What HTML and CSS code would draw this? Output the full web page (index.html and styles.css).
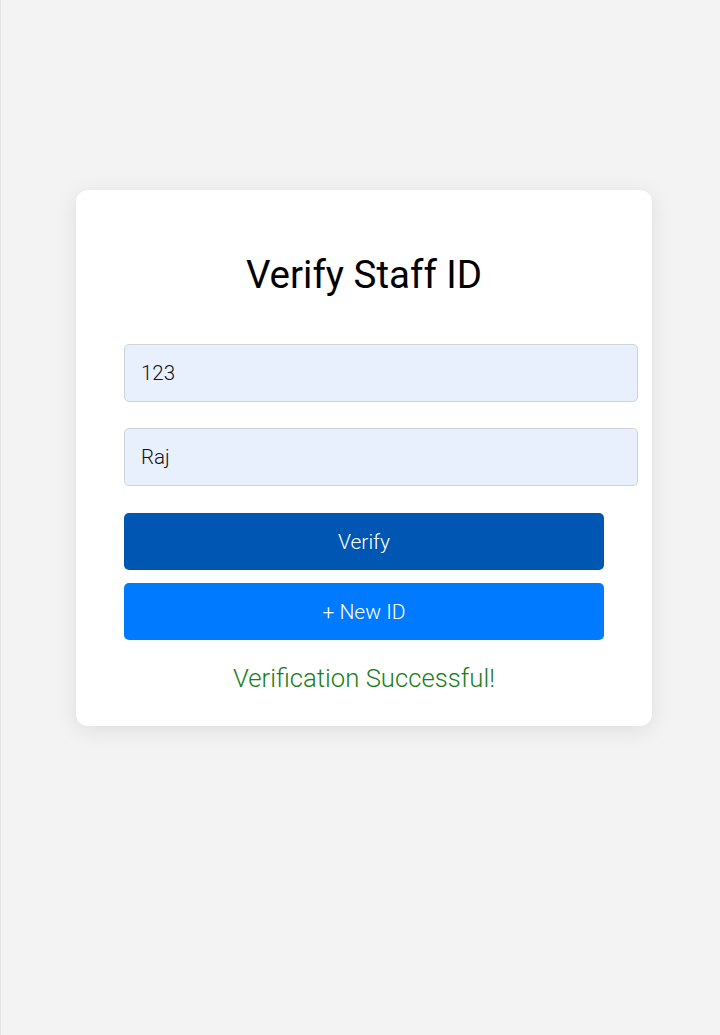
FILE: index.html
```html
<!DOCTYPE html>
<html lang="en">
<head>
<meta charset="utf-8">
<title>Verify Staff ID</title>
<link rel="stylesheet" href="styles.css">
</head>
<body>
<div class="page">
  <div class="card">
    <h1 class="title">Verify Staff ID</h1>
    <input class="field" type="text" value="123">
    <input class="field field-last" type="text" value="Raj">
    <button class="btn btn-verify">Verify</button>
    <button class="btn btn-new">+ New ID</button>
    <p class="status">Verification Successful!</p>
  </div>
</div>
</body>
</html>
```

FILE: styles.css
```css
html, body {
  margin: 0;
  padding: 0;
}
body {
  background: #f3f3f3;
  font-family: Roboto, "Liberation Sans", sans-serif;
  min-height: 1035px;
  border-left: 1px solid #e4e4e4;
  box-sizing: border-box;
}
.page {
  padding: 190px 0 0 7px;
  display: flex;
  justify-content: center;
}
.card {
  width: 576px;
  box-sizing: border-box;
  background: #fff;
  border-radius: 12px;
  box-shadow: 0 4px 22px rgba(0, 0, 0, 0.09);
  padding: 62px 48px 33px;
  display: flex;
  flex-direction: column;
  align-items: flex-start;
}
.title {
  align-self: stretch;
  margin: 0 0 46px;
  font-size: 38.5px;
  line-height: 46px;
  font-weight: 400;
  color: #000;
  text-align: center;
}
.field {
  width: 480px;
  box-sizing: content-box;
  height: 56px;
  padding: 0 16px;
  margin: 0 0 26px;
  border: 1px solid #cfd3d8;
  border-radius: 5px;
  background: #e8f0fe;
  font-family: Roboto, "Liberation Sans", sans-serif;
  font-size: 20.5px;
  font-weight: 300;
  color: #111;
  outline: none;
}
.field-last {
  margin-bottom: 27px;
}
.btn {
  width: 480px;
  height: 57px;
  border: 0;
  border-radius: 5px;
  color: #fff;
  font-family: Roboto, "Liberation Sans", sans-serif;
  font-size: 21px;
  font-weight: 300;
  padding: 0;
}
.btn-verify {
  background: #0056b3;
  margin-bottom: 13px;
}
.btn-new {
  background: #007bff;
}
.status {
  align-self: stretch;
  margin: 23px 0 0;
  font-size: 25.7px;
  line-height: 30px;
  font-weight: 300;
  color: #198019;
  text-align: center;
}
```
